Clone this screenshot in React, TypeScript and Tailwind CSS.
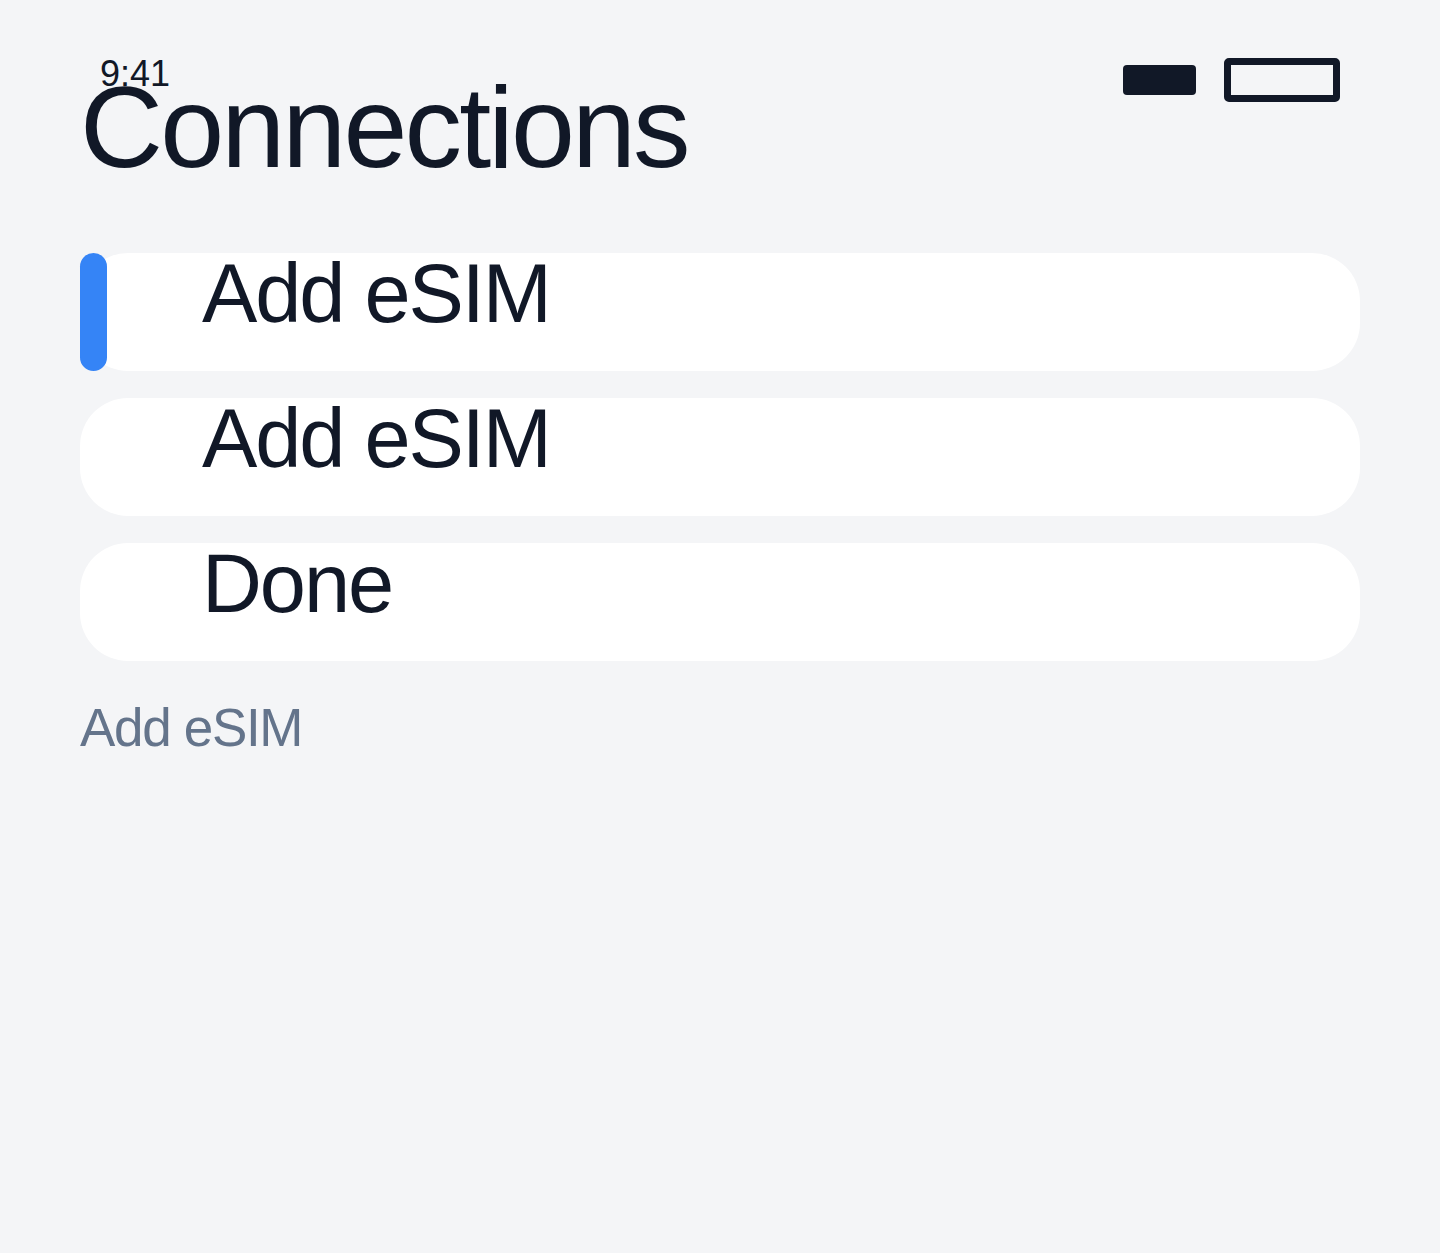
const rows = [
  { label: "Add eSIM", active: true },
  { label: "Add eSIM", active: false },
  { label: "Done", active: false },
];

function StatusBar() {
  return (
    <div className="flex h-[15px] items-start justify-between px-5">
      <span className="mt-[1px] text-[36px] leading-none">9:41</span>
      <div className="flex items-start gap-[28px]">
        <div className="mt-[10px] h-[30px] w-[73px] rounded-[4px] bg-[#111827]" />
        <div className="mt-[3px] h-[44px] w-[116px] rounded-[5px] border-[7px] border-[#111827]" />
      </div>
    </div>
  );
}

export default function App() {
  return (
    <div
      className="min-h-screen bg-[#f4f5f7] px-20 pt-[55px] text-[#111827]"
      style={{ fontFamily: '"Liberation Sans", Arial, sans-serif' }}
    >
      <StatusBar />

      <h1 className="text-[115px] leading-none font-normal tracking-tight">Connections</h1>

      <div className="mt-[68px] flex flex-col gap-[27px]">
        {rows.map((row, i) => (
          <button
            key={i}
            className="flex h-[118px] items-stretch rounded-[48px] bg-white text-left"
          >
            <span
              className={
                row.active
                  ? "w-[27px] shrink-0 rounded-full bg-[#3584f6]"
                  : "w-[27px] shrink-0"
              }
            />
            <span className="ml-[95px] -mt-[1px] text-[83px] leading-none tracking-tight">{row.label}</span>
          </button>
        ))}
      </div>

      <p className="mt-[40px] text-[53px] leading-none tracking-tight text-[#64748b]">Add eSIM</p>
    </div>
  );
}
